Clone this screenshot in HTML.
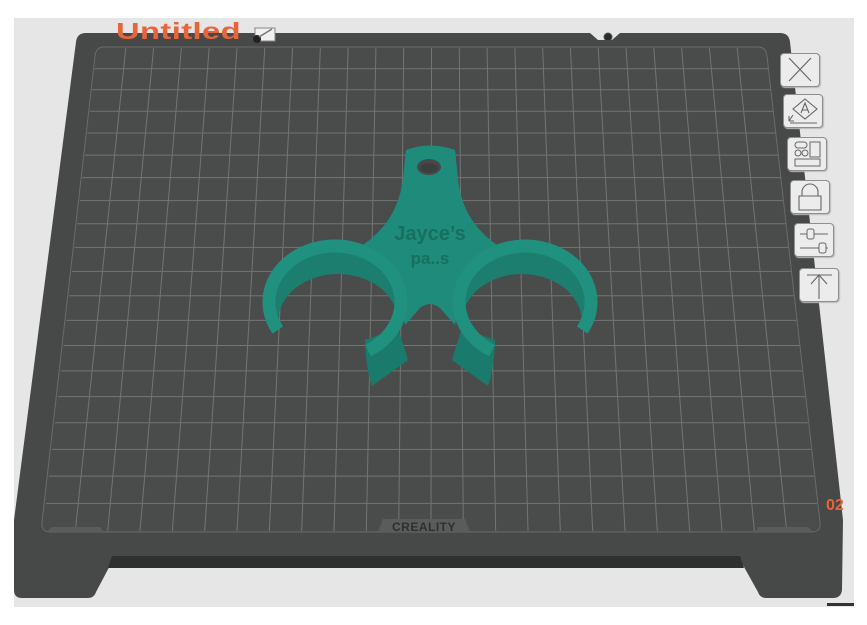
<!DOCTYPE html>
<html><head><meta charset="utf-8"><style>
html,body{margin:0;padding:0;background:#fff;width:867px;height:625px;overflow:hidden;font-family:"Liberation Sans",sans-serif}
#bg{position:absolute;left:14px;top:18px;width:840px;height:589px;background:#e6e6e6}
svg{position:absolute;left:0;top:0}
.t{position:absolute;left:116px;top:18px;font-weight:bold;font-size:23px;color:#e8643a;transform:scaleX(1.42);transform-origin:left top;letter-spacing:0.3px}
.n{position:absolute;left:826px;top:497px;font-weight:bold;font-size:16px;color:#e8643a}
.b{position:absolute;width:38px;height:32px;background:#ececec;border:1px solid #8f8f8f;border-radius:4px;box-shadow:1px 1px 1px #bbb}
</style></head><body>
<div id="bg"></div>
<svg width="867" height="625" viewBox="0 0 867 625" id="s">
<defs>
<mask id="m1"><rect width="867" height="625" fill="black"/><ellipse cx="335" cy="302" rx="61" ry="51" fill="white"/><ellipse cx="338" cy="322" rx="60" ry="48" fill="black"/><rect x="250" y="330" width="120" height="60" fill="black"/></mask>
<mask id="m2"><rect width="867" height="625" fill="black"/><ellipse cx="525" cy="302" rx="61" ry="51" fill="white"/><ellipse cx="522" cy="322" rx="60" ry="48" fill="black"/><rect x="490" y="330" width="120" height="60" fill="black"/></mask>
</defs>
<path d="M86 33 L590 33 L598 40 L612 40 L620 33 L780 33 Q789 33 790 42 L843 520 L842 590 Q841 598 833 598 L766 598 Q760 598 758 592 L739 558 L114 558 L96 592 Q94 598 88 598 L22 598 Q14 598 14 590 L14 520 L76 42 Q77 33 86 33 Z" fill="#474948"/>
<path d="M112 556 L740 556 L744 568 L108 568 Z" fill="#2e302f"/>
<circle cx="608" cy="37" r="4" fill="#2a2a2a" stroke="#555" stroke-width="1"/>
<path d="M104 47 L758 47 Q766 47 767 56 L820 522 Q821 532 812 532 L50 532 Q41 532 42 522 L95 56 Q96 47 104 47 Z" fill="#4a4c4b" stroke="#6a6c6b" stroke-width="1"/>
<g id="grid" stroke="#737574" stroke-width="1"></g>
<path d="M383 519 L465 519 L470 532 L378 532 Z" fill="#5a5c5b"/>
<text x="424" y="531" text-anchor="middle" font-family="Liberation Sans" font-size="12" font-weight="bold" fill="#2e302f" letter-spacing="0.5">CREALITY</text>
<path d="M52 527 L100 527 L103 531 L48 531 Z" fill="#5a5c5b"/>
<path d="M758 527 L808 527 L812 531 L756 531 Z" fill="#5a5c5b"/>
<g>
<path d="M365 340 L398 328 L408 360 L372 386 Q366 370 365 340 Z" fill="#1a7a6b"/>
<path d="M495 340 L462 328 L452 360 L488 386 Q494 370 495 340 Z" fill="#1a7a6b"/>
<path d="M406 150 Q430 141 455 150 L458 178 Q462 225 505 250 L462 290 L455 325 L440 308 Q430 300 420 308 L405 325 L398 290 L355 250 Q398 225 403 178 Z" fill="#1f8b7b"/>
<ellipse cx="429" cy="167" rx="12" ry="8" fill="#474948"/>
<ellipse cx="429" cy="168" rx="9" ry="5" fill="#3d3f3e"/>
<rect width="867" height="625" fill="#1b7e6f" mask="url(#m1)"/>
<rect width="867" height="625" fill="#1b7e6f" mask="url(#m2)"/>
<path d="M277.8 330 A66 56 0 1 1 368 350.5" fill="none" stroke="#20907f" stroke-width="13"/>
<path d="M582.2 330 A66 56 0 1 0 492 350.5" fill="none" stroke="#20907f" stroke-width="13"/>
<text x="430" y="240" text-anchor="middle" font-family="Liberation Sans" font-weight="bold" font-size="20" fill="#17705f">Jayce’s</text>
<text x="430" y="264" text-anchor="middle" font-family="Liberation Sans" font-weight="bold" font-size="17" fill="#17705f">pa..s</text>
</g>
<rect x="255" y="28" width="20" height="13" fill="#f0f0f0" stroke="#888" stroke-width="1"/>
<circle cx="257" cy="39" r="4" fill="#222"/>
<line x1="259" y1="37" x2="272" y2="29" stroke="#777" stroke-width="1.5"/>
</svg>
<div class="t">Untitled</div>
<div class="n">02</div>
<div class="b" style="left:780px;top:53px"><svg width="38" height="32"><path d="M8 4 L30 27 M30 4 L8 27" stroke="#666" stroke-width="1.2" fill="none"/></svg></div>
<div class="b" style="left:783px;top:94px"><svg width="38" height="32"><path d="M21 4 L33 14 L21 24 L9 14 Z M17 18 L21 8 L25 18 M18 15 L24 15 M6 28 L33 28 M9 20 L5 26 M5 26 L10 26 M5 26 L5 21" stroke="#666" stroke-width="1.1" fill="none"/></svg></div>
<div class="b" style="left:787px;top:137px"><svg width="38" height="32"><rect x="7" y="4" width="12" height="6" rx="3" stroke="#666" fill="none"/><circle cx="10" cy="15" r="3" stroke="#666" fill="none"/><circle cx="17" cy="15" r="3" stroke="#666" fill="none"/><rect x="22" y="4" width="10" height="15" stroke="#666" fill="none"/><rect x="7" y="21" width="25" height="7" stroke="#666" fill="none"/></svg></div>
<div class="b" style="left:790px;top:180px"><svg width="38" height="32"><path d="M11 15 L11 11 A8 8 0 0 1 27 11 L27 15 M8 15 L30 15 L30 29 L8 29 Z" stroke="#666" fill="none" stroke-width="1.1"/></svg></div>
<div class="b" style="left:794px;top:223px"><svg width="38" height="32"><path d="M5 10 L33 10 M5 24 L33 24" stroke="#666" fill="none"/><rect x="12" y="5" width="7" height="10" rx="2" fill="#ececec" stroke="#666"/><rect x="24" y="19" width="7" height="10" rx="2" fill="#ececec" stroke="#666"/></svg></div>
<div class="b" style="left:799px;top:268px"><svg width="38" height="32"><path d="M7 6 L32 6 M19 6 L19 30 M11 15 L19 6 L27 15" stroke="#666" fill="none" stroke-width="1.1"/></svg></div>
<div style="position:absolute;left:827px;top:603px;width:27px;height:3px;background:#333"></div>
<script>
var g=document.getElementById('grid'),h='';
var N=24;
for(var i=1;i<N;i++){var xt=98+667*i/N,xb=43+776*i/N;h+='<line x1="'+xt+'" y1="48" x2="'+xb+'" y2="531"/>';}
var M=20;
for(var j=1;j<M;j++){var f=j/M;var y=48+483*(f*0.85+0.15*f*f);var xl=97-54*(y-48)/483,xr=766+54*(y-48)/483;h+='<line x1="'+xl+'" y1="'+y+'" x2="'+xr+'" y2="'+y+'"/>';}
g.innerHTML=h;
</script>
</body></html>
